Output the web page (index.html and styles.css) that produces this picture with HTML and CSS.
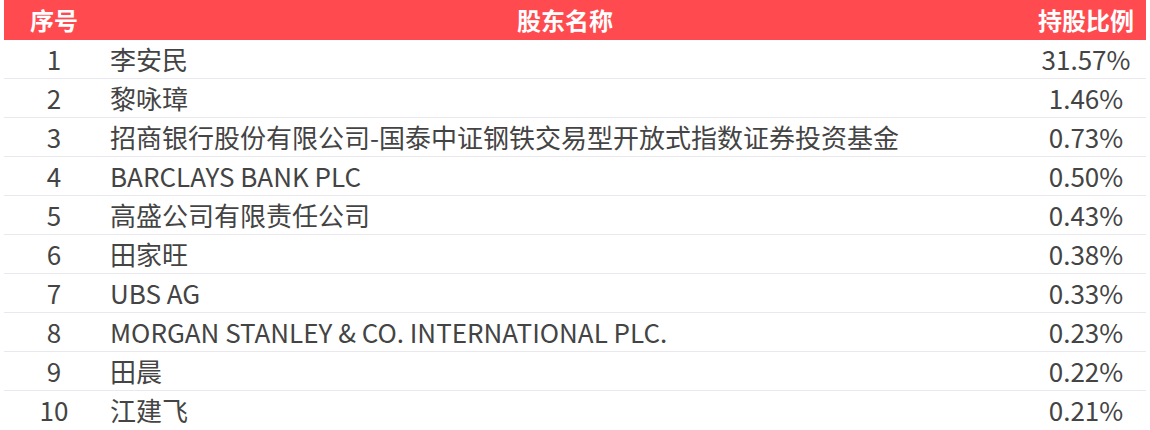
FILE: index.html
```html
<!DOCTYPE html>
<html lang="zh">
<head>
<meta charset="utf-8">
<link rel="stylesheet" href="styles.css">
</head>
<body>
<div class="wrap">
<table class="holders">
<thead>
<tr><th class="c-no">序号</th><th class="c-name">股东名称</th><th class="c-pct">持股比例</th></tr>
</thead>
<tbody>
<tr><td class="c-no">1</td><td class="c-name">李安民</td><td class="c-pct">31.57%</td></tr>
<tr><td class="c-no">2</td><td class="c-name">黎咏璋</td><td class="c-pct">1.46%</td></tr>
<tr><td class="c-no">3</td><td class="c-name">招商银行股份有限公司-国泰中证钢铁交易型开放式指数证券投资基金</td><td class="c-pct">0.73%</td></tr>
<tr><td class="c-no">4</td><td class="c-name">BARCLAYS BANK PLC</td><td class="c-pct">0.50%</td></tr>
<tr><td class="c-no">5</td><td class="c-name">高盛公司有限责任公司</td><td class="c-pct">0.43%</td></tr>
<tr><td class="c-no">6</td><td class="c-name">田家旺</td><td class="c-pct">0.38%</td></tr>
<tr><td class="c-no">7</td><td class="c-name">UBS AG</td><td class="c-pct">0.33%</td></tr>
<tr><td class="c-no">8</td><td class="c-name">MORGAN STANLEY &amp; CO. INTERNATIONAL PLC.</td><td class="c-pct">0.23%</td></tr>
<tr><td class="c-no">9</td><td class="c-name">田晨</td><td class="c-pct">0.22%</td></tr>
<tr><td class="c-no">10</td><td class="c-name">江建飞</td><td class="c-pct">0.21%</td></tr>
</tbody>
</table>
</div>
</body>
</html>
```
FILE: styles.css
```css
html, body {
  margin: 0;
  padding: 0;
  background: #ffffff;
}
body {
  font-family: "Noto Sans CJK SC", "Noto Sans", sans-serif;
  color: #444444;
}
.wrap {
  padding: 0 4px;
}
.holders {
  width: 1142px;
  border-collapse: collapse;
  table-layout: fixed;
}
.holders th {
  background: #ff4b4f;
  color: #ffffff;
  font-size: 24px;
  font-weight: 700;
  height: 40px;
  padding: 0;
  line-height: 40px;
  text-align: center;
}
.holders td {
  font-size: 26px;
  font-weight: 400;
  height: 38px;
  padding: 0;
  line-height: 38px;
  border-bottom: 1px solid #e8e8ee;
  white-space: nowrap;
}
.holders tbody tr:last-child td {
  border-bottom: none;
}
.c-no {
  width: 100px;
  text-align: center;
}
.holders td.c-name {
  text-align: left;
  padding-left: 6px;
}
.c-pct {
  width: 120px;
  text-align: center;
}
```
